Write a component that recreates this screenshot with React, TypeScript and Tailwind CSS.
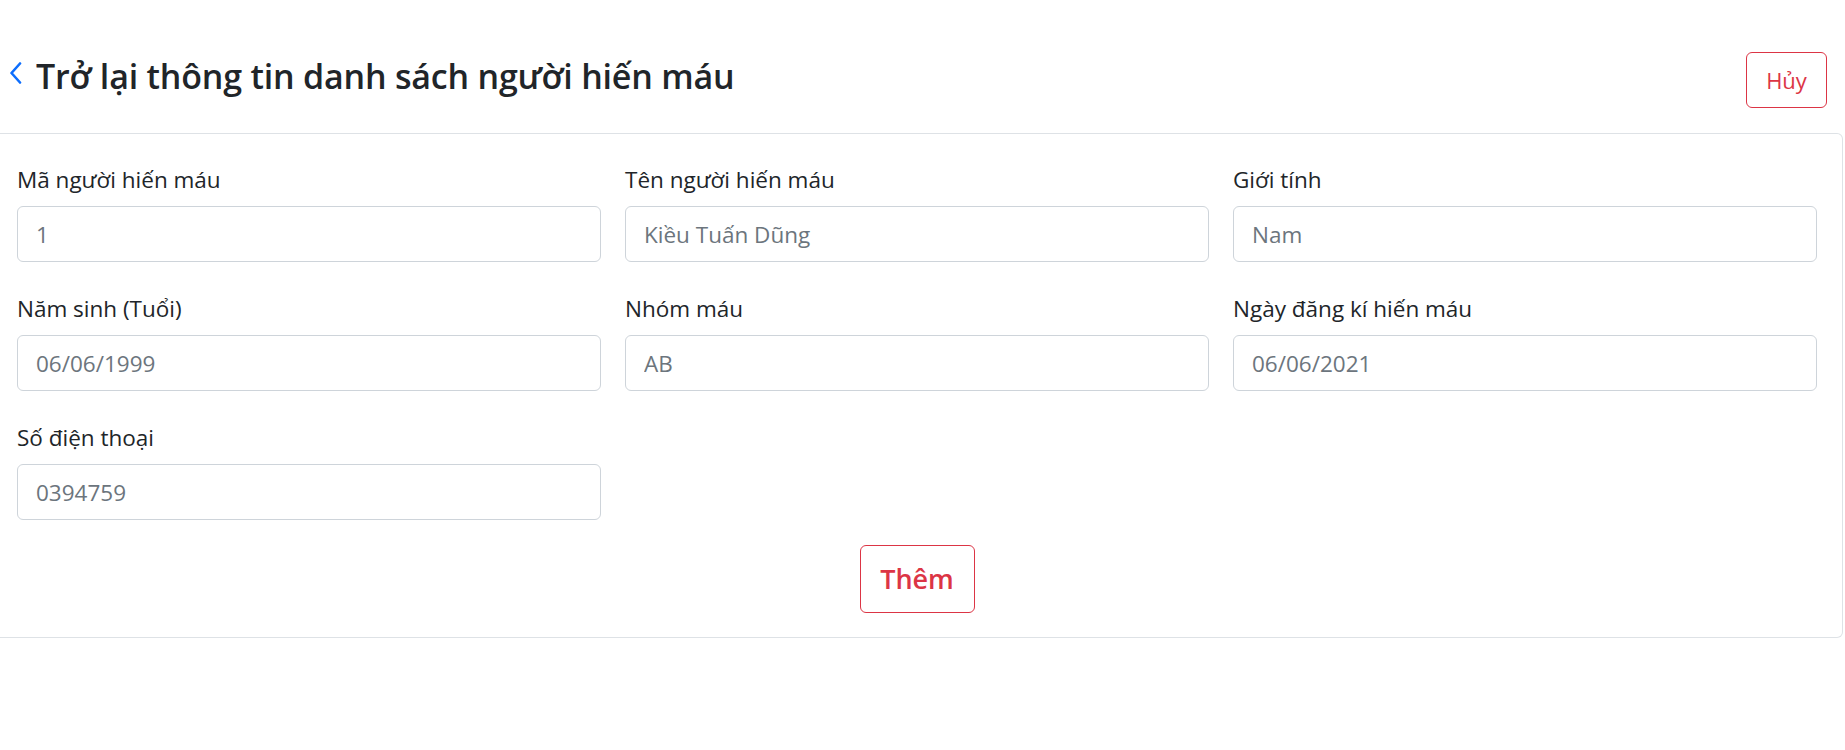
const fields = [
    { label: 'Mã người hiến máu', value: '1' },
    { label: 'Tên người hiến máu', value: 'Kiều Tuấn Dũng' },
    { label: 'Giới tính', value: 'Nam' },
    { label: 'Năm sinh (Tuổi)', value: '06/06/1999' },
    { label: 'Nhóm máu', value: 'AB' },
    { label: 'Ngày đăng kí hiến máu', value: '06/06/2021' },
    { label: 'Số điện thoại', value: '0394759' },
];

export default function App() {
    return (
        <div className="min-h-[750px] bg-white text-[#212529] font-['Open_Sans',sans-serif]">
            {/* Header */}
            <div className="flex items-center justify-between pt-[52px] pl-[9px] pr-[18px] pb-[25px]">
                <div className="flex items-center gap-[14px]">
                    <svg width="13" height="22" viewBox="0 0 13 22" className="-mt-[14px]">
                        <polyline points="11,1.5 2.5,11 11,20.5" fill="none" stroke="#0d6efd" strokeWidth="2.6" strokeLinecap="round" strokeLinejoin="round" />
                    </svg>
                    <h2 className="text-[34px] leading-[48px] font-semibold -mt-[8px] tracking-[-0.2px]">
                        Trở lại thông tin danh sách người hiến máu
                    </h2>
                </div>
                <button className="w-[81px] h-[56px] border border-[#dc3545] rounded-[6px] text-[#dc3545] text-[22px]">
                    Hủy
                </button>
            </div>

            {/* Card */}
            <div className="mr-[2px] border-t border-r border-b border-[#dee2e6] rounded-r-[6px] pt-[29px] pl-[17px] pr-[25px] pb-[24px]">
                <div className="grid grid-cols-3 gap-x-[24px] gap-y-[30px]">
                    {fields.map((f) => (
                        <div key={f.label} className="flex flex-col">
                            <label className="text-[22.5px] leading-[33px] mb-[10px]">{f.label}</label>
                            <input
                                readOnly
                                placeholder={f.value}
                                className="h-[56px] border border-[#ced4da] rounded-[6px] px-[18px] text-[22.5px] text-[#6c757d] placeholder-[#6c757d] outline-none"
                            />
                        </div>
                    ))}
                </div>
                <div className="flex justify-center mt-[25px]">
                    <button className="w-[115px] h-[68px] border border-[#dc3545] rounded-[6px] text-[#dc3545] text-[27px] font-semibold">
                        Thêm
                    </button>
                </div>
            </div>
        </div>
    );
}
